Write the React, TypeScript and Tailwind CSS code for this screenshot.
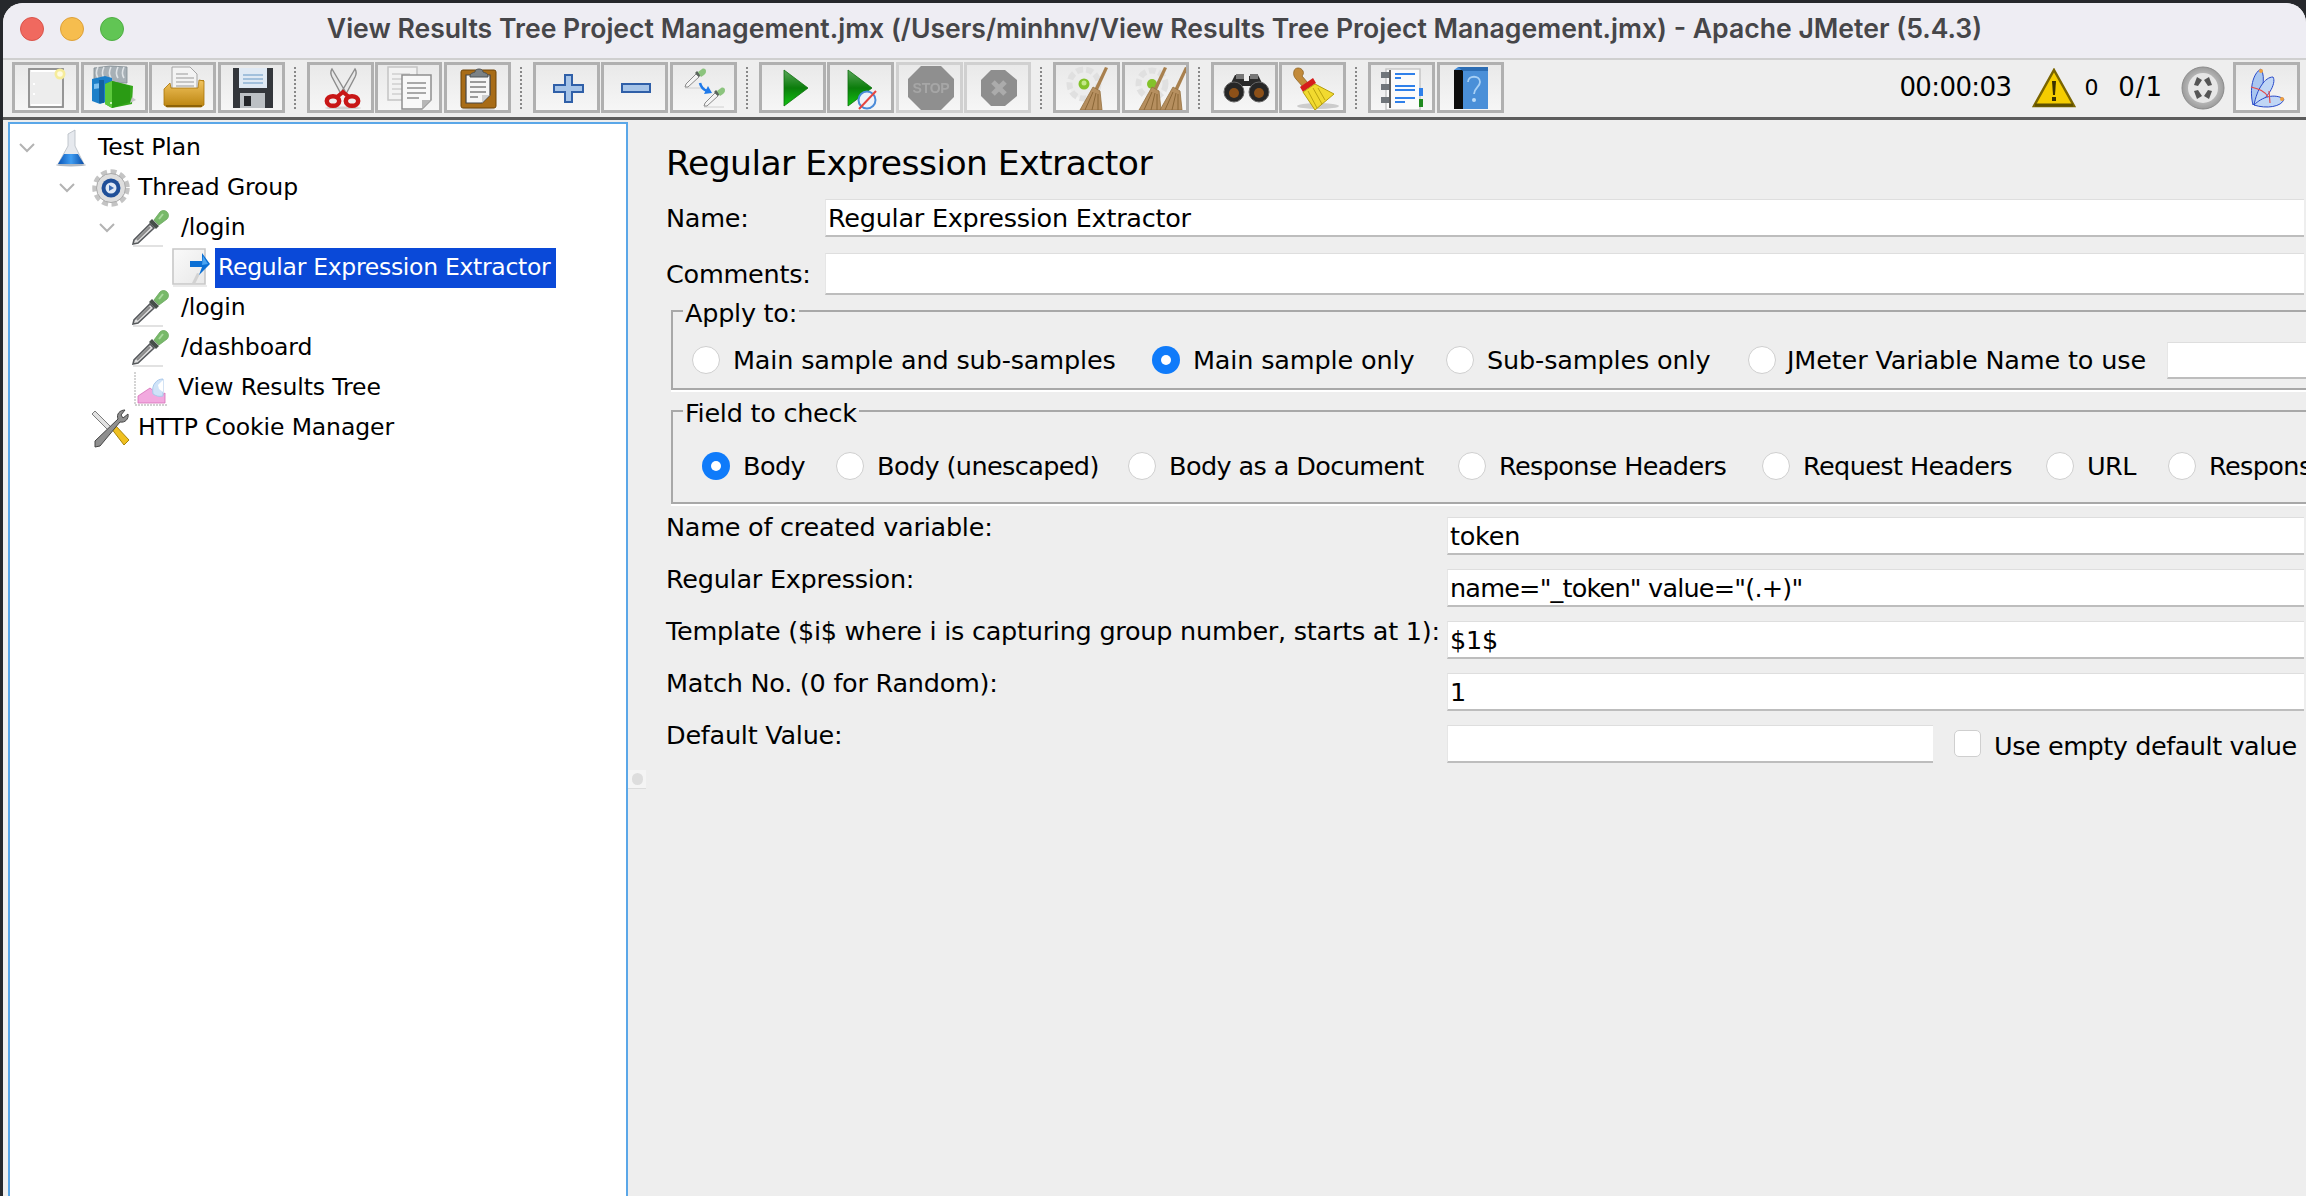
import type { ReactNode } from 'react'

const Flask = () => (
  <svg width="40" height="40" viewBox="0 0 40 40" className="blur-[0.3px]">
    <defs><linearGradient id="fl" x1="0" x2="1"><stop offset="0" stopColor="#0a55b8" /><stop offset=".5" stopColor="#3f9df2" /><stop offset="1" stopColor="#0a4da8" /></linearGradient></defs>
    <ellipse cx="21" cy="37" rx="15" ry="1.5" fill="#aeb8c4" />
    <path d="M18 6l7-4v16l9 18H8l10-18z" fill="#e6e9ee" stroke="#b4bac2" strokeWidth=".8" />
    <path d="M14 26h14l6 10H8z" fill="url(#fl)" />
  </svg>
)

const Gear = () => (
  <svg width="40" height="40" viewBox="0 0 40 40" className="blur-[0.3px]">
    <circle cx="21" cy="20" r="16.5" fill="none" stroke="#c4c4c4" strokeDasharray="6 3.6" strokeWidth="4.5" />
    <circle cx="21" cy="20" r="14.5" fill="#dedede" stroke="#a8a8a8" />
    <circle cx="21" cy="20" r="9.5" fill="#1f4f98" />
    <circle cx="21" cy="20" r="5.5" fill="#dfe8f5" />
    <path d="M19 17l5 3-5 3z" fill="#3a6cb5" />
  </svg>
)

const Dropper = () => (
  <svg width="40" height="40" viewBox="0 0 40 40" className="blur-[0.3px]">
    <path d="M3 38h30" stroke="#d8d8d8" strokeWidth="1.5" />
    <path d="M3 36l1-4 16-16 4 4L8 35z" fill="#dedede" stroke="#56595c" strokeWidth="1.6" />
    <path d="M7 32l13-13" stroke="#8a8a8a" strokeWidth="2" />
    <path d="M19 14l7 7 3-3-7-7z" fill="#46504a" />
    <path d="M24 12l6-8c2-2 5-2 7 0s2 5 0 7l-8 6z" fill="#78b96a" stroke="#67a65a" strokeWidth=".8" />
    <path d="M29 11l4-5" stroke="#a9d99e" strokeWidth="2" />
  </svg>
)

const RegexDoc = () => (
  <svg width="40" height="40" viewBox="0 0 40 40" className="blur-[0.3px]">
    <defs><linearGradient id="rd" x1="0" x2="1" y1="0" y2="1"><stop offset="0" stopColor="#fafafa" /><stop offset="1" stopColor="#e8e8e8" /></linearGradient></defs>
    <path d="M3 1h32v35H3z" fill="url(#rd)" stroke="#c8c8c8" strokeWidth="1.6" />
    <path d="M3 38h34" stroke="#e4e4e4" strokeWidth="1.5" />
    <path d="M22 35l5-10 3 1-5 10z" fill="#d2d2d2" />
    <path d="M32 5l8 11-11 11 3-8H20v-6h12z" fill="#0b6fd4" />
    <path d="M33 8l5 8-6 1z" fill="#4aa3f0" />
  </svg>
)

const Graph = () => (
  <svg width="40" height="40" viewBox="0 0 40 40" className="blur-[0.3px]">
    <path d="M5 4v33h33" fill="none" stroke="#c2c2c2" strokeWidth="1.4" strokeDasharray="2 1" />
    <path d="M8 35v-7l12-8 10 8 5-3v10z" fill="#f2a9df" stroke="#d56fb8" strokeWidth=".8" />
    <path d="M23 26c-1-5 0-9 2-11 2-3 5-4 8-4v17c-4 1-7 0-10-2z" fill="#cfe3f8" stroke="#a9c8ea" />
    <path d="M28 17l5-5v12l-4-3z" fill="#fff" />
  </svg>
)

const Tools = () => (
  <svg width="40" height="40" viewBox="0 0 40 40" className="blur-[0.3px]">
    <path d="M2 6l3-3 18 18-3 3z" fill="#e2e2e2" stroke="#7c7c7c" strokeWidth="1" />
    <path d="M21 20l4-3 14 15-5 5z" fill="#f0c020" stroke="#a88408" />
    <path d="M5 33L28 11c-2-5 2-9 7-9l-4 5 2 3 5-4c1 5-3 9-8 8L10 38l-5 1z" fill="#8f8f8f" stroke="#444" strokeWidth="1" />
  </svg>
)

const Chevron = () => (
  <svg width="16" height="10" viewBox="0 0 16 10" className="shrink-0">
    <path d="M1 1l7 7 7-7" fill="none" stroke="#b3b3b3" strokeWidth="2" />
  </svg>
)

// toolbar drawings use the button's inner box as their viewBox
const Icon = ({ children }: { children: ReactNode }) => (
  <svg width="61" height="45" viewBox="0 0 61 45" className="blur-[0.4px]">{children}</svg>
)

const NewIcon = () => (
  <Icon>
    <rect x="14" y="4" width="34" height="38" fill="#ededed" stroke="#8c8c8c" strokeWidth="1.8" />
    <path d="M16 5h30v2H16zM16 39h30v2H16z" fill="#fff" />
    <circle cx="45" cy="9" r="5.5" fill="#f6ec9a" />
    <circle cx="45" cy="9" r="2.8" fill="#fffbe0" />
    <path d="M18 19h2M18 29h2" stroke="#fff" strokeWidth="2" />
  </Icon>
)

const TemplatesIcon = () => (
  <Icon>
    <path d="M10 3l16-2 17 1v16H10z" fill="#a7b0b6" stroke="#7f8a90" strokeWidth=".8" />
    <path d="M14 2c-2 4-2 8 0 11M20 2c-2 4-2 8 0 11M27 2c-2 4-2 8 0 11M34 2c-2 4-2 8 0 11M40 2c-2 4-2 8 0 11" fill="none" stroke="#dfe3e6" strokeWidth="1.6" />
    <path d="M8 14l13-3 7 2v22l-12 4-8-3z" fill="#1c7fc9" />
    <path d="M10 19l7-1v5l-7 1z" fill="#7dc0ef" />
    <path d="M15 15h5v23h-5z" fill="#12609f" />
    <path d="M21 19l7-3 21 5-1 18-20 4-7-4z" fill="#36a81c" />
    <path d="M21 19l7-3v27l-7-4z" fill="#5cc93c" />
    <path d="M28 16l18 5v16l-18 6z" fill="#2a9b14" />
    <path d="M46 38l6-3-4-3z" fill="#c6c6c6" />
    <circle cx="27" cy="38" r="1" fill="#e8ffe0" />
  </Icon>
)

const OpenIcon = () => (
  <Icon>
    <defs><linearGradient id="fo" x1="0" x2="0" y1="0" y2="1"><stop offset="0" stopColor="#f2c45f" /><stop offset="1" stopColor="#bb840f" /></linearGradient></defs>
    <path d="M47 15h5v23H47z" fill="#b8810f" />
    <path d="M20 2h18l7 7v18H20z" fill="#f3f3f3" stroke="#a4a4a4" />
    <path d="M24 9h12M24 13h18M24 17h18M24 21h18" stroke="#b8b8b8" strokeWidth="1.6" />
    <path d="M18 18l1 5h27l1-8 5 1v24l-3 2H15l-3-2v-16z" fill="url(#fo)" stroke="#a87509" strokeWidth=".8" />
    <path d="M14 41h36" stroke="#8d6207" strokeWidth="2" />
  </Icon>
)

const SaveIcon = () => (
  <Icon>
    <path d="M12 3h40v40H12z" fill="#34373c" />
    <rect x="18" y="3" width="28" height="20" fill="#dfe9f4" />
    <path d="M22 10h20M22 14h20M22 18h20" stroke="#8fb2d3" strokeWidth="1.5" />
    <rect x="19" y="28" width="25" height="15" fill="#bcc0c4" />
    <rect x="23" y="31" width="7" height="10" fill="#24262a" />
  </Icon>
)

const CutIcon = () => (
  <Icon>
    <ellipse cx="33" cy="43" rx="18" ry="1.5" fill="#d0d0d0" />
    <path d="M22 4c-2 3-1 6 0 8l9 17 4-3zM45 4c2 3 1 6 0 8l-9 17-4-3z" fill="#e8e8e8" stroke="#8c8c8c" strokeWidth="1.4" />
    <ellipse cx="23" cy="36" rx="6.2" ry="4.8" fill="#eee" stroke="#c81616" strokeWidth="4.5" />
    <ellipse cx="42" cy="36" rx="6.2" ry="4.8" fill="#eee" stroke="#c81616" strokeWidth="4.5" />
    <path d="M27 32l6-5 6 5" fill="none" stroke="#c81616" strokeWidth="4" />
  </Icon>
)

const CopyIcon = () => (
  <Icon>
    <path d="M10 2h29v33H10z" fill="#f2f2f2" stroke="#c4c4c4" strokeWidth="1.5" />
    <path d="M14 9h18M14 14h10M14 19h10M14 24h10M14 29h10" stroke="#d0d0d0" strokeWidth="1.6" />
    <path d="M24 10h29v25l-9 9H24z" fill="#f8f8f8" stroke="#8e8e8e" strokeWidth="1.5" />
    <path d="M29 18h19M29 23h19M29 28h19M29 33h12" stroke="#a8a8a8" strokeWidth="1.8" />
    <path d="M44 44v-9h9z" fill="#b7b7b7" />
  </Icon>
)

const PasteIcon = () => (
  <Icon>
    <ellipse cx="31" cy="44" rx="17" ry="1" fill="#c8c8c8" />
    <rect x="14" y="5" width="35" height="38" rx="2" fill="#a86c17" stroke="#6f4509" />
    <path d="M19 10h24v20l-8 8H19z" fill="#f6f6f6" stroke="#444" strokeWidth="1.2" />
    <path d="M23 17h16M23 22h16M23 27h16M23 32h8" stroke="#9b9b9b" strokeWidth="1.8" />
    <path d="M35 38v-8h8z" fill="#cfcfcf" />
    <path d="M23 11c0-3 3-3 5-4 0-4 8-4 8 0 2 1 5 1 5 4v1H23z" fill="#7b8286" stroke="#4d5356" />
  </Icon>
)

const PlusIcon = () => (
  <Icon>
    <path d="M29 10h7v10h11v7H36v10h-7V27H18v-7h11z" fill="#a6c4e8" stroke="#2f5fa8" strokeWidth="2" />
  </Icon>
)

const MinusIcon = () => (
  <Icon>
    <rect x="18" y="19" width="28" height="8" fill="#a6c4e8" stroke="#2f5fa8" strokeWidth="2" />
  </Icon>
)

const MiniDropper = ({ x, y }: { x: number; y: number }) => (
  <g transform={`translate(${x} ${y})`}>
    <path d="M1 21h20" stroke="#d0d0d0" strokeWidth="1" />
    <path d="M1 20l1-3 10-10 3 3L4 20z" fill="#f4f4f4" stroke="#8a8a8a" strokeWidth="1" />
    <path d="M11 6l4 4 2-2-4-4z" fill="#5b665d" />
    <path d="M14 5l4-3c2-1 4 0 4 2s-1 3-2 4l-3 2z" fill="#8cc47e" />
  </g>
)

const ToggleIcon = () => (
  <Icon>
    <MiniDropper x={11} y={2} />
    <MiniDropper x={30} y={21} />
    <path d="M27 18c1 4 4 7 7 8" fill="none" stroke="#1f7aea" strokeWidth="2.6" />
    <path d="M31 29l8-1-4-7z" fill="#1f7aea" />
  </Icon>
)

const PlayShape = ({ x, id }: { x: number; id: string }) => (
  <g transform={`translate(${x} 0)`}>
    <defs><linearGradient id={id} x1="0" x2="0" y1="0" y2="1"><stop offset="0" stopColor="#5aa55a" /><stop offset=".5" stopColor="#0b7d0b" /><stop offset="1" stopColor="#12c412" /></linearGradient></defs>
    <path d="M0 5l24 18L0 41z" fill={`url(#${id})`} stroke="#0a6f0a" strokeWidth=".8" />
  </g>
)

const PlayIcon = () => (
  <Icon><PlayShape x={22} id="pl" /></Icon>
)

const PlayNoTimerIcon = () => (
  <Icon>
    <PlayShape x={18} id="pn" />
    <circle cx="37" cy="35" r="8.5" fill="#eef3fa" stroke="#4b8bd8" strokeWidth="2" />
    <path d="M29 44l17-18" stroke="#e6453f" strokeWidth="2" />
  </Icon>
)

const StopIcon = () => (
  <Icon>
    <path d="M22 1h20l13 13v18L42 45H22L9 32V14z" fill="#8f8f8f" />
    <text x="32" y="28" textAnchor="middle" fontSize="14" fontWeight="700" fill="#a6a6a6" fontFamily="Liberation Sans, sans-serif">STOP</text>
  </Icon>
)

const ShutdownIcon = () => (
  <Icon>
    <path d="M24 5h14l12 10v16L38 41H24L14 31V15z" fill="#8e8e8e" />
    <path d="M26 17l12 12M38 17L26 29" stroke="#ababab" strokeWidth="5" />
  </Icon>
)

const BroomShape = ({ x = 0 }: { x?: number }) => (
  <g transform={`translate(${x} 0)`}>
    <path d="M49 2l3 1-11 24-3-2z" fill="#a8804e" />
    <path d="M37 22l7 4 2 19H24z" fill="#b68f5f" stroke="#94703f" strokeWidth=".8" />
    <path d="M37 27l-8 18M40 28l-4 17M42 29l0 16" stroke="#8a6637" strokeWidth="1" />
  </g>
)

const ClearIcon = () => (
  <Icon>
    <circle cx="28" cy="19" r="14.5" fill="#ececec" stroke="#e0e0e0" strokeWidth="6" strokeDasharray="7 3" />
    <circle cx="28" cy="19" r="5.5" fill="#83c22a" />
    <circle cx="28" cy="18" r="2.5" fill="#c4e888" />
    <BroomShape />
  </Icon>
)

const ClearAllIcon = () => (
  <Icon>
    <circle cx="27" cy="19" r="13.5" fill="#ececec" stroke="#e0e0e0" strokeWidth="6" strokeDasharray="7 3" />
    <circle cx="27" cy="19" r="5" fill="#83c22a" />
    <BroomShape x={-10} />
    <BroomShape x={11} />
  </Icon>
)

const BinocularsIcon = () => (
  <Icon>
    <path d="M21 10l9 1v5h5v-5l9-1 9 18H40l-3-7h-9l-3 7H12z" fill="#2a2a2a" />
    <path d="M22 9h8v5h-8zM36 9h8v5h-8z" fill="#777" />
    <circle cx="20" cy="27" r="10" fill="#262626" stroke="#666" />
    <circle cx="45" cy="27" r="10" fill="#262626" stroke="#666" />
    <circle cx="20" cy="28" r="5" fill="#8c5018" />
    <circle cx="45" cy="28" r="5" fill="#8c5018" />
  </Icon>
)

const SweepIcon = () => (
  <Icon>
    <ellipse cx="36" cy="41" rx="21" ry="3" fill="#cccccc" />
    <path d="M12 6c1-4 7-4 9 0 1 2 0 4-1 5l6 7-5 4-7-8c-2-2-3-5-2-8z" fill="#c28a3a" stroke="#8e6220" strokeWidth=".8" />
    <path d="M18 22l13-9 3 5-13 9z" fill="#d61c1c" />
    <path d="M21 27l12-8 19 10-19 16z" fill="#f2da2f" stroke="#b39c0c" />
    <path d="M26 26l9 17M31 23l9 16M36 23l7 12" stroke="#bba40f" />
  </Icon>
)

const FunctionsIcon = () => (
  <Icon>
    <rect x="15" y="4" width="34" height="41" fill="#fbfbfb" stroke="#c4c4c4" strokeWidth="1.4" />
    <path d="M24 9h20M24 13h6M24 21h20M24 25h20M24 33h20M24 37h10" stroke="#2f80ea" strokeWidth="2" />
    <path d="M10 7h8v6h-8zM10 19h8v6h-8zM10 32h8v6h-8z" fill="#70757a" />
    <path d="M19 5v38" stroke="#2b2b2b" strokeWidth="1.5" />
    <rect x="48" y="23" width="4" height="8" fill="#2f80ea" />
    <rect x="48" y="34" width="4" height="8" fill="#1f8a1f" />
  </Icon>
)

const HelpIcon = () => (
  <Icon>
    <path d="M14 5l4-3h30v42H14z" fill="#4a8fd8" />
    <path d="M14 5h9v39h-9z" fill="#0d0d0d" />
    <path d="M18 2h30v4H23z" fill="#2c6db4" />
    <path d="M28 17c0-7 12-7 12 0 0 5-6 6-6 12" fill="none" stroke="#a8d0f5" strokeWidth="1.8" />
    <circle cx="34" cy="35" r="2" fill="#bcdcf8" />
  </Icon>
)

const WarnIcon = () => (
  <svg width="44" height="40" viewBox="0 0 44 40" className="blur-[0.3px]">
    <path d="M22 2l20 36H2z" fill="#f5cd00" stroke="#7a6500" strokeWidth="2.5" />
    <path d="M20 13h4l-1 14h-2z" fill="#3a3000" />
    <rect x="20" y="29" width="4" height="4" fill="#3a3000" />
    <path d="M3 37h38" stroke="#5f5000" strokeWidth="3" />
  </svg>
)

const GuiIcon = () => (
  <svg width="44" height="44" viewBox="0 0 44 44" className="blur-[0.3px]">
    <defs><radialGradient id="gc"><stop offset="0" stopColor="#f1f1f1" /><stop offset="1" stopColor="#9c9c9c" /></radialGradient></defs>
    <circle cx="22" cy="22" r="21" fill="url(#gc)" stroke="#8a8a8a" />
    <circle cx="22" cy="22" r="15" fill="#e6e6e6" />
    <path d="M13 19l3-8 5 3-4 6zM31 19l-3-8-5 3 4 6zM13 25l3 8 5-3-4-6zM31 25l-3 8-5-3 4-6z" fill="#555" />
  </svg>
)

const LogoIcon = () => (
  <svg width="40" height="42" viewBox="0 0 40 42" className="blur-[0.2px]">
    <path d="M6 38C2 22 6 6 14 2c5 8 2 26-8 36z" fill="#a9c6f0" stroke="#2748c8" />
    <path d="M7 38C10 22 18 10 26 10c4 6-6 24-19 28z" fill="#c0d6f5" stroke="#2748c8" />
    <path d="M7 38c8-8 20-12 30-6-2 8-18 10-30 6z" fill="#c0d6f5" stroke="#2748c8" />
    <path d="M4 20c8 2 14 4 17 10M22 24l1 12" fill="none" stroke="#e34a4a" strokeWidth="1.2" />
    <circle cx="14" cy="4" r="2" fill="#f0a040" />
    <circle cx="35" cy="32" r="2" fill="#f0a040" />
  </svg>
)

const Btn = ({ children, off }: { children: ReactNode; off?: boolean }) => (
  <div className={`w-[67px] h-[51px] flex items-center justify-center overflow-hidden border-[3px] bg-gradient-to-b from-[#e9e9e9] to-[#f6f6f6] ml-[1.5px] first:ml-0 ${off ? 'border-[#d0d0d0]' : 'border-[#b0b0b0]'}`}>
    {children}
  </div>
)

const Sep = () => (
  <div className="h-[42px] ml-[9px] mr-[11px] w-[2px] border-l-2 border-dotted border-[#888]" />
)

const Row = ({ pl, chevron, icon, label, selected, tx = '' }: { pl: number; chevron?: boolean; icon: ReactNode; label: string; selected?: boolean; tx?: string }) => (
  <div className="h-[40px] flex items-center" style={{ paddingLeft: pl }}>
    <div className="w-[31px] shrink-0 flex justify-start">{chevron && <Chevron />}</div>
    <div className="w-[40px] h-[40px] shrink-0 flex items-center justify-center">{icon}</div>
    <span className={selected ? 'ml-[5px] h-[40px] pl-[3px] pr-[6px] flex items-center bg-[#0a49d8] text-white tracking-[-0.3px]' : `ml-[8px] ${tx}`}>{label}</span>
  </div>
)

const Radio = ({ checked, label, box, gap = 'ml-[13px]' }: { checked?: boolean; label: string; box: string; gap?: string }) => (
  <div className={`flex items-center shrink-0 ${box}`}>
    {checked ? (
      <div className="w-[28px] h-[28px] shrink-0 rounded-full bg-[#0f7bfa] flex items-center justify-center">
        <div className="w-[10px] h-[10px] rounded-full bg-white" />
      </div>
    ) : (
      <div className="w-[28px] h-[28px] shrink-0 rounded-full bg-white border border-[#cfcfcf]" />
    )}
    <span className={`${gap} whitespace-nowrap`}>{label}</span>
  </div>
)

const Field = ({ value, cls }: { value?: string; cls: string }) => (
  <input readOnly defaultValue={value} className={`bg-white border-t border-t-[#dedede] border-l border-l-[#e6e6e6] border-b-2 border-b-[#bdbdbd] pl-[2px] pt-[1px] outline-none ${cls}`} />
)

const Labeled = ({ label, value, tight }: { label: string; value?: string; tight?: boolean }) => (
  <div className="flex h-[38px] mb-[14px]">
    <span className="w-[781px] shrink-0 whitespace-nowrap -mt-[1px] h-[22px] leading-[22px]">{label}</span>
    <Field value={value} cls={`flex-1 min-w-0 h-[38px] ${tight ? 'tracking-[-0.8px]' : ''}`} />
  </div>
)

const App = () => {
  return (
    <div className="w-[2306px] h-[1196px] bg-[#26282c] overflow-hidden pt-[3px] pl-[3px] font-['DejaVu_Sans',sans-serif] text-[25.5px] tracking-[-0.25px] text-black">
      <div className="h-full bg-[#eeeeee] rounded-tl-[20px] rounded-tr-[20px] overflow-hidden flex flex-col">
        <div className="h-[57px] shrink-0 pb-[3px] bg-[#eeedf3] border-b-2 border-[#cfcfcf] relative flex items-center justify-center font-['Inter',sans-serif] font-semibold text-[26.6px] tracking-[0px] text-[#464649]">
          <div className="absolute left-[17px] top-[14px] flex gap-[16px]">
            <div className="w-[24px] h-[24px] rounded-full bg-[#f0695f] border border-[#d9544b]" />
            <div className="w-[24px] h-[24px] rounded-full bg-[#f6bd4e] border border-[#dda03a]" />
            <div className="w-[24px] h-[24px] rounded-full bg-[#61c554] border border-[#4fae44]" />
          </div>
          View Results Tree Project Management.jmx (/Users/minhnv/View Results Tree Project Management.jmx) - Apache JMeter (5.4.3)
        </div>

        <div className="h-[60px] shrink-0 border-b-[3px] border-[#5c5c5c] flex items-center pl-[9px] pb-[2px]">
          <div className="flex"><Btn><NewIcon /></Btn><Btn><TemplatesIcon /></Btn><Btn><OpenIcon /></Btn><Btn><SaveIcon /></Btn></div>
          <Sep />
          <div className="flex"><Btn><CutIcon /></Btn><Btn><CopyIcon /></Btn><Btn><PasteIcon /></Btn></div>
          <Sep />
          <div className="flex"><Btn><PlusIcon /></Btn><Btn><MinusIcon /></Btn><Btn><ToggleIcon /></Btn></div>
          <Sep />
          <div className="flex"><Btn><PlayIcon /></Btn><Btn><PlayNoTimerIcon /></Btn><Btn off><StopIcon /></Btn><Btn off><ShutdownIcon /></Btn></div>
          <Sep />
          <div className="flex"><Btn><ClearIcon /></Btn><Btn><ClearAllIcon /></Btn></div>
          <Sep />
          <div className="flex"><Btn><BinocularsIcon /></Btn><Btn><SweepIcon /></Btn></div>
          <Sep />
          <div className="flex"><Btn><FunctionsIcon /></Btn><Btn><HelpIcon /></Btn></div>
          <div className="ml-auto flex items-center pr-[6px]">
            <span className="text-[26px] tracking-[-0.6px]">00:00:03</span>
            <div className="ml-[21px]"><WarnIcon /></div>
            <span className="ml-[8px] text-[22px]">0</span>
            <span className="ml-[20px] text-[26px] tracking-[1px]">0/1</span>
            <div className="ml-[18px]"><GuiIcon /></div>
            <div className="ml-[8px]"><Btn><LogoIcon /></Btn></div>
          </div>
        </div>

        <div className="flex-1 min-h-0 flex pt-[2px]">
          <div className="w-[620px] shrink-0 ml-[5px] bg-white border-2 border-b-0 border-[#5aa7e8] pt-[4px] pl-[9px] text-[23.5px] tracking-[-0.1px]">
            <Row pl={0} chevron icon={<Flask />} label="Test Plan" />
            <Row pl={40} chevron icon={<Gear />} label="Thread Group" />
            <Row pl={80} chevron icon={<Dropper />} label="/login" tx="pl-[3px]" />
            <Row pl={120} icon={<RegexDoc />} label="Regular Expression Extractor" selected />
            <Row pl={80} icon={<Dropper />} label="/login" tx="pl-[3px]" />
            <Row pl={80} icon={<Dropper />} label="/dashboard" tx="pl-[3px]" />
            <Row pl={80} icon={<Graph />} label="View Results Tree" />
            <Row pl={40} icon={<Tools />} label="HTTP Cookie Manager" />
          </div>

          <div className="flex-1 min-w-0 relative pl-[38px] pr-[2px] overflow-hidden">
            {/* splitter grip */}
            <div className="absolute left-0 top-[648px] w-[18px] h-[19px] bg-[#f4f4f4] border-b border-[#dcdcdc] flex items-center justify-center">
              <div className="w-[11px] h-[12px] rounded-full bg-[#dddddd]" />
            </div>

            <div className="h-[42px] mt-[21px] flex items-center text-[34.6px] tracking-[-0.55px]">Regular Expression Extractor</div>
            <div className="flex h-[38px] mt-[14px] items-center">
              <span className="w-[159px] shrink-0">Name:</span>
              <Field value="Regular Expression Extractor" cls="flex-1 min-w-0 h-[38px]" />
            </div>
            <div className="flex h-[42px] mt-[16px] items-center">
              <span className="w-[159px] shrink-0">Comments:</span>
              <Field cls="flex-1 min-w-0 h-[42px]" />
            </div>

            <fieldset className="ml-[5px] h-[95px] border-2 border-r-0 border-[#a8a8a8] shadow-[0_2px_0_#fff]">
              <legend className="ml-[10px] px-[2px] pt-[4px] leading-[28px]">Apply to:</legend>
              <div className="flex items-center h-[52px] mt-[7px] pl-[19px] overflow-hidden tracking-[-0.15px]">
                <Radio label="Main sample and sub-samples" box="w-[460px]" />
                <Radio label="Main sample only" checked box="w-[294px]" />
                <Radio label="Sub-samples only" box="w-[302px]" />
                <Radio label="JMeter Variable Name to use" box="w-[419px]" gap="ml-[11px]" />
                <Field cls="h-[37px] w-[140px] shrink-0" />
              </div>
            </fieldset>

            <fieldset className="mt-[5px] ml-[5px] h-[109px] border-2 border-r-0 border-[#a8a8a8] shadow-[0_2px_0_#fff] overflow-hidden">
              <legend className="ml-[10px] px-[2px] pt-[4px] leading-[28px]">Field to check</legend>
              <div className="flex items-center h-[56px] mt-[11px] pl-[29px] overflow-hidden tracking-[-0.6px]">
                <Radio label="Body" checked box="w-[134px]" />
                <Radio label="Body (unescaped)" box="w-[292px]" />
                <Radio label="Body as a Document" box="w-[330px]" />
                <Radio label="Response Headers" box="w-[304px]" />
                <Radio label="Request Headers" box="w-[284px]" />
                <Radio label="URL" box="w-[122px]" />
                <Radio label="Response Messages" box="w-[300px]" />
              </div>
            </fieldset>

            <div className="mt-[13px]">
              <Labeled label="Name of created variable:" value="token" />
              <Labeled label="Regular Expression:" value={'name="_token" value="(.+)"'} tight />
              <Labeled label="Template ($i$ where i is capturing group number, starts at 1):" value="$1$" />
              <Labeled label="Match No. (0 for Random):" value="1" />
              <div className="flex h-[38px] items-start">
                <span className="w-[781px] shrink-0 -mt-[1px] h-[22px] leading-[22px]">Default Value:</span>
                <Field cls="w-[486px] h-[38px]" />
                <div className="ml-[21px] w-[27px] h-[27px] mt-[5px] rounded-[5px] bg-white border border-[#cfcfcf]" />
                <span className="ml-[13px] whitespace-nowrap mt-[2px] tracking-[-0.45px]">Use empty default value</span>
              </div>
            </div>
          </div>
        </div>
      </div>
    </div>
  )
}

export default App
